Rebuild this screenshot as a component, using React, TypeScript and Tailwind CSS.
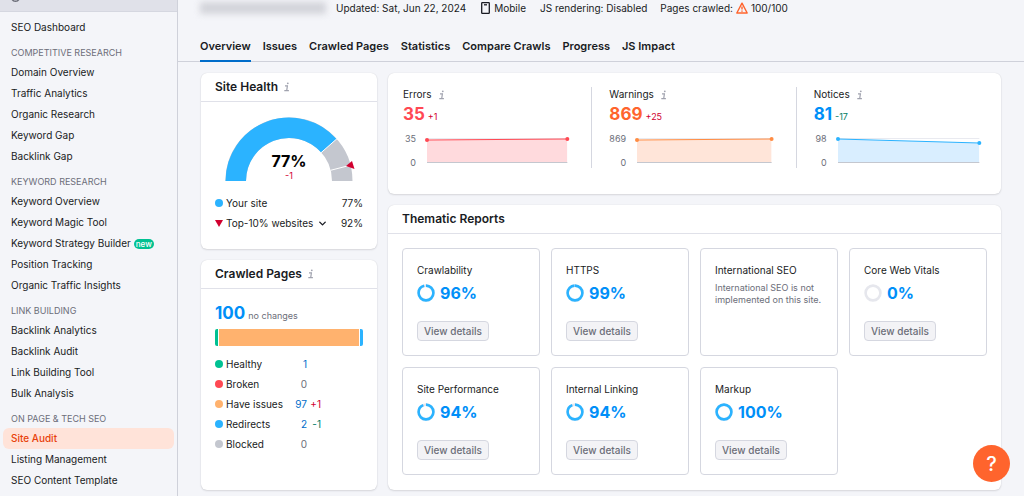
import { ChevronDown } from "lucide-react";
import type { ReactNode } from "react";

const NAV_GROUPS = [
  {
    title: "COMPETITIVE RESEARCH",
    items: ["Domain Overview", "Traffic Analytics", "Organic Research", "Keyword Gap", "Backlink Gap"],
  },
  {
    title: "KEYWORD RESEARCH",
    items: [
      "Keyword Overview",
      "Keyword Magic Tool",
      "Keyword Strategy Builder",
      "Position Tracking",
      "Organic Traffic Insights",
    ],
  },
  {
    title: "LINK BUILDING",
    items: ["Backlink Analytics", "Backlink Audit", "Link Building Tool", "Bulk Analysis"],
  },
  {
    title: "ON PAGE & TECH SEO",
    items: ["Site Audit", "Listing Management", "SEO Content Template"],
  },
];

const TABS = ["Overview", "Issues", "Crawled Pages", "Statistics", "Compare Crawls", "Progress", "JS Impact"];

const CRAWLED = [
  { label: "Healthy", dot: "bg-[#00c192]", value: 1, delta: "", deltaColor: "" },
  { label: "Broken", dot: "bg-[#ff4953]", value: 0, delta: "", deltaColor: "" },
  { label: "Have issues", dot: "bg-[#ffb26e]", value: 97, delta: "+1", deltaColor: "text-[#d1002f]" },
  { label: "Redirects", dot: "bg-[#2bb3ff]", value: 2, delta: "-1", deltaColor: "text-[#007c65]" },
  { label: "Blocked", dot: "bg-[#c4c7cf]", value: 0, delta: "", deltaColor: "" },
];

// from / to are the line's heights inside the 25px plot, measured from the top
const ISSUES = [
  { label: "Errors", value: 35, delta: "+1", max: 35, color: "text-[#ff4953]", deltaColor: "text-[#d1002f]", line: "#ff4953", fill: "#ffdadd", from: 2, to: 1 },
  { label: "Warnings", value: 869, delta: "+25", max: 869, color: "text-[#ff642d]", deltaColor: "text-[#d1002f]", line: "#ff8c43", fill: "#ffe5d9", from: 2, to: 1 },
  { label: "Notices", value: 81, delta: "-17", max: 98, color: "text-[#008ff8]", deltaColor: "text-[#007c65]", line: "#2bb3ff", fill: "#d9eeff", from: 1, to: 5 },
];

const REPORTS = [
  { title: "Crawlability", score: 96 },
  { title: "HTTPS", score: 99 },
  { title: "International SEO", note: "International SEO is not implemented on this site." },
  { title: "Core Web Vitals", score: 0 },
  { title: "Site Performance", score: 94 },
  { title: "Internal Linking", score: 94 },
  { title: "Markup", score: 100 },
];

function InfoIcon() {
  return (
    <svg width="6" height="10" viewBox="0 0 6 10" className="shrink-0" fill="none" stroke="#a0a2ae" strokeWidth="1.2" aria-hidden="true">
      <path d="M1 3.8h2.4L2.7 8.6M0.3 8.6h4.6" />
      <circle cx="3.8" cy="1.3" r="0.9" fill="#a0a2ae" stroke="none" />
    </svg>
  );
}

function Card({ title, info, className, children }: { title?: string; info?: boolean; className?: string; children: ReactNode }) {
  return (
    <section className={`rounded-md bg-white shadow-[0_0_1px_rgba(25,27,35,0.16),0_1px_2px_rgba(25,27,35,0.12)] ${className ?? ""}`}>
      {title && (
        <header className="flex h-[29px] items-center gap-[6px] border-b border-[#e0e1e9] px-[14px]">
          <h2 className="text-[12px] font-semibold">{title}</h2>
          {info && <InfoIcon />}
        </header>
      )}
      {children}
    </section>
  );
}

function Sidebar() {
  return (
    <aside className="w-[178px] shrink-0 border-r border-[#cfd1da]">
      <div className="h-3 overflow-hidden border-b border-[#d5d7e0] bg-[#e0e1e9] pl-[11px]">
        <svg width="9" height="3" viewBox="0 0 9 3" fill="none" stroke="#6c6e79" aria-hidden="true">
          <path d="M1 -1C2 2 7 2 8 -1" strokeWidth="1.5" />
        </svg>
      </div>
      <nav className="pt-[5px] text-[10px]">
        <a href="#" className="flex h-[21px] items-center px-[11px]">SEO Dashboard</a>
        {NAV_GROUPS.map((group) => (
          <div key={group.title} className="mt-[6px]">
            <p className="flex h-[18px] items-center px-[11px] text-[9px] text-[#6c6e79]">{group.title}</p>
            {group.items.map((item) => (
              <a
                key={item}
                href="#"
                className={
                  item === "Site Audit"
                    ? "mx-[3px] flex h-[21px] items-center rounded-md bg-[#ffe3d9] px-2 font-medium text-[#e8410a]"
                    : "flex h-[21px] items-center gap-[3px] px-[11px]"
                }
              >
                {item}
                {item === "Keyword Strategy Builder" && (
                  <span className="flex h-[10px] items-center rounded-full bg-[#00c192] px-[2px] text-[8px] font-medium text-white">
                    new
                  </span>
                )}
              </a>
            ))}
          </div>
        ))}
      </nav>
    </aside>
  );
}

function Header() {
  return (
    <header className="border-b border-[#cfd1da] px-[22px]">
      <div className="flex h-4 items-center text-[10px]">
        <div className="mr-[10px] h-3 w-[126px] bg-[#d3d4da] blur-[3px]" />
        <span>Updated: Sat, Jun 22, 2024</span>
        <span className="ml-[15px] flex items-center gap-1">
          <svg width="9" height="12" viewBox="0 0 9 12" fill="none" stroke="#191b23" strokeWidth="1.3" aria-hidden="true">
            <rect x="0.7" y="0.7" width="7.6" height="10.6" rx="0.6" />
            <path d="M3 2.8h3" />
          </svg>
          Mobile
        </span>
        <span className="ml-[14px]">JS rendering: Disabled</span>
        <span className="ml-[13px] flex items-center gap-[3px]">
          Pages crawled:
          <svg width="12" height="12" viewBox="0 0 12 12" fill="none" stroke="#ff642d" strokeWidth="1.4" strokeLinejoin="round" aria-hidden="true">
            <path d="M6 1.2L11.2 11H0.8Z" />
            <path d="M6 4.6v3M6 8.4v1.3" />
          </svg>
          100/100
        </span>
      </div>
      <nav className="mt-4 flex gap-3 text-[11px] font-semibold">
        {TABS.map((tab) => (
          <a
            key={tab}
            href="#"
            className={
              tab === "Overview"
                ? "-mb-px flex h-[30px] items-center border-b-2 border-[#006dca]"
                : "flex h-[29px] items-center"
            }
          >
            {tab}
          </a>
        ))}
      </nav>
    </header>
  );
}

function SiteHealth() {
  return (
    <Card title="Site Health" info className="pb-4">
      <div className="px-[14px]">
        <div className="relative mt-[15px] flex justify-center">
          <svg width="136" height="65" viewBox="-68 -64 136 65" className="overflow-visible" aria-hidden="true">
            <path d="M-53.25 0A53.25 53.25 0 0 1 53.25 0" fill="none" stroke="#c4c7cf" strokeWidth="20.5" />
            <path d="M-53.25 0A53.25 53.25 0 0 1 39.9 -35.2" fill="none" stroke="#2bb3ff" strokeWidth="20.5" />
            <path d="M31.5 -27.8L48.4 -42.7M41.6 -10.7L61.5 -15.8" stroke="#fff" />
            <path d="M57 -15L63 -20L65.5 -12Z" fill="#d1002f" />
          </svg>
          <div className="absolute inset-x-0 bottom-0 text-center">
            <p className="text-[16px] leading-[18px] font-bold text-black">77%</p>
            <p className="text-[9px] leading-3 text-[#d1002f]">-1</p>
          </div>
        </div>
        <dl className="mt-[11px] text-[10px]">
          <div className="flex h-5 items-center justify-between">
            <dt className="flex items-center gap-[3px]">
              <span className="size-2 rounded-full bg-[#2bb3ff]" />
              Your site
            </dt>
            <dd>77%</dd>
          </div>
          <div className="flex h-5 items-center justify-between">
            <dt>
              <button className="flex items-center gap-[3px]">
                <svg width="8" height="7" viewBox="0 0 8 7" aria-hidden="true">
                  <path d="M0 0h8L4 7Z" fill="#d1002f" />
                </svg>
                Top-10% websites
                <ChevronDown size={11} strokeWidth={3} className="ml-px" />
              </button>
            </dt>
            <dd>92%</dd>
          </div>
        </dl>
      </div>
    </Card>
  );
}

function CrawledPages() {
  return (
    <Card title="Crawled Pages" info className="flex-1">
      <div className="px-[14px] pt-3">
        <p className="flex items-baseline gap-[3px]">
          <span className="text-[17px] leading-6 font-bold text-[#008ff8]">100</span>
          <span className="text-[9px] text-[#6c6e79]">no changes</span>
        </p>
        <div className="mt-1 flex h-[17px] gap-px overflow-hidden rounded-xs">
          <span className="w-[3px] bg-[#00c192]" />
          <span className="flex-1 bg-[#ffb26e]" />
          <span className="w-[3px] bg-[#2bb3ff]" />
        </div>
        <table className="mt-2 text-[10px]">
          <tbody>
            {CRAWLED.map((row) => (
              <tr key={row.label} className="h-5">
                <th scope="row" className="w-[72px] p-0 font-normal">
                  <span className="flex items-center gap-[3px] whitespace-nowrap">
                    <span className={`size-2 rounded-full ${row.dot}`} />
                    {row.label}
                  </span>
                </th>
                <td className={`w-5 p-0 text-right ${row.value ? "text-[#006dca]" : "text-[#6c6e79]"}`}>{row.value}</td>
                <td className={`w-[14px] p-0 pl-[3px] text-right ${row.deltaColor}`}>{row.delta}</td>
              </tr>
            ))}
          </tbody>
        </table>
      </div>
    </Card>
  );
}

function TrendChart({ line, fill, from, to }: { line: string; fill: string; from: number; to: number }) {
  return (
    <svg className="h-[25px] min-w-0 flex-1 overflow-visible" aria-hidden="true">
      <line x1="0" x2="100%" y1="0.5" y2="0.5" stroke="#e9eaf0" />
      <svg width="100%" height="25" viewBox="0 0 100 25" preserveAspectRatio="none">
        <polygon points={`0,${from} 100,${to} 100,25 0,25`} fill={fill} />
      </svg>
      <line x1="0" x2="100%" y1="24.5" y2="24.5" stroke="#c4c7cf" />
      <line x1="0" x2="100%" y1={from} y2={to} stroke={line} />
      <circle cx="0" cy={from} r="2" fill={line} />
      <circle cx="100%" cy={to} r="2" fill={line} />
    </svg>
  );
}

function Issues() {
  return (
    <Card className="pt-[14px] pb-[26px]">
      <div className="grid grid-cols-3 divide-x divide-[#d5d7e0]">
        {ISSUES.map((issue) => (
          <div key={issue.label} className="h-[81px] pr-6 pl-[15px] not-first:pl-[17px] last:pr-[22px]">
            <p className="flex h-[15px] items-center gap-[7px] text-[10px]">
              {issue.label}
              <InfoIcon />
            </p>
            <p className="mt-[2px] flex items-baseline gap-[3px]">
              <span className={`text-[17px] leading-5 font-bold ${issue.color}`}>{issue.value}</span>
              <span className={`text-[9px] ${issue.deltaColor}`}>{issue.delta}</span>
            </p>
            <div className="mt-[14px] flex gap-[11px]">
              <div className="-my-1 flex min-w-[13px] flex-col justify-between text-right text-[9px] leading-[9px] text-[#6c6e79]">
                <span>{issue.max}</span>
                <span>0</span>
              </div>
              <TrendChart line={issue.line} fill={issue.fill} from={issue.from} to={issue.to} />
            </div>
          </div>
        ))}
      </div>
    </Card>
  );
}

function ScoreRing({ score }: { score: number }) {
  return (
    <svg width="18" height="18" viewBox="0 0 18 18" fill="none" strokeWidth="2.6" aria-hidden="true">
      <circle cx="9" cy="9" r="7.4" stroke="#e6e7ed" />
      {score > 0 && (
        <circle
          cx="9"
          cy="9"
          r="7.4"
          stroke="#2bb3ff"
          pathLength={100}
          strokeDasharray={`${score} 100`}
          transform="rotate(-90 9 9)"
        />
      )}
    </svg>
  );
}

function ThematicReports() {
  return (
    <Card title="Thematic Reports">
      <div className="grid grid-cols-4 gap-[11px] px-[14px] pt-[14px] pb-[15px]">
        {REPORTS.map((report) => (
          <article key={report.title} className="flex h-[108px] flex-col items-start rounded border border-[#d5d7e0] px-[14px] pt-[13px] pb-[14px]">
            <h3 className="text-[10px] leading-4">{report.title}</h3>
            {report.note && <p className="mt-1 text-[9px] leading-3 text-[#6c6e79]">{report.note}</p>}
            {report.score !== undefined && (
              <>
                <p className="mt-[3px] flex items-center gap-[5px] text-[16px] leading-6 font-bold text-[#008ff8]">
                  <ScoreRing score={report.score} />
                  {report.score}%
                </p>
                <button className="mt-auto h-5 rounded border border-[#d5d7e0] bg-[#f3f3f6] px-[6px] text-[10px] leading-[18px] font-medium text-[#6c6e79]">
                  View details
                </button>
              </>
            )}
          </article>
        ))}
      </div>
    </Card>
  );
}

export default function App() {
  return (
    <div className="flex min-h-screen bg-[#f4f5f9] font-['Inter',sans-serif] text-[#191b23]">
      <Sidebar />
      <div className="min-w-0 flex-1">
        <Header />
        <main className="grid grid-cols-[176px_minmax(0,1fr)] gap-[11px] px-[23px] pt-[11px]">
          <div className="flex flex-col gap-[11px]">
            <SiteHealth />
            <CrawledPages />
          </div>
          <div className="flex flex-col gap-[11px]">
            <Issues />
            <ThematicReports />
          </div>
        </main>
      </div>

      {/* Help */}
      <button
        aria-label="Help"
        className="fixed right-[14px] bottom-[14px] flex size-[37px] items-center justify-center rounded-full bg-[#ff642d] text-[20px] font-medium text-white"
      >
        ?
      </button>
    </div>
  );
}
